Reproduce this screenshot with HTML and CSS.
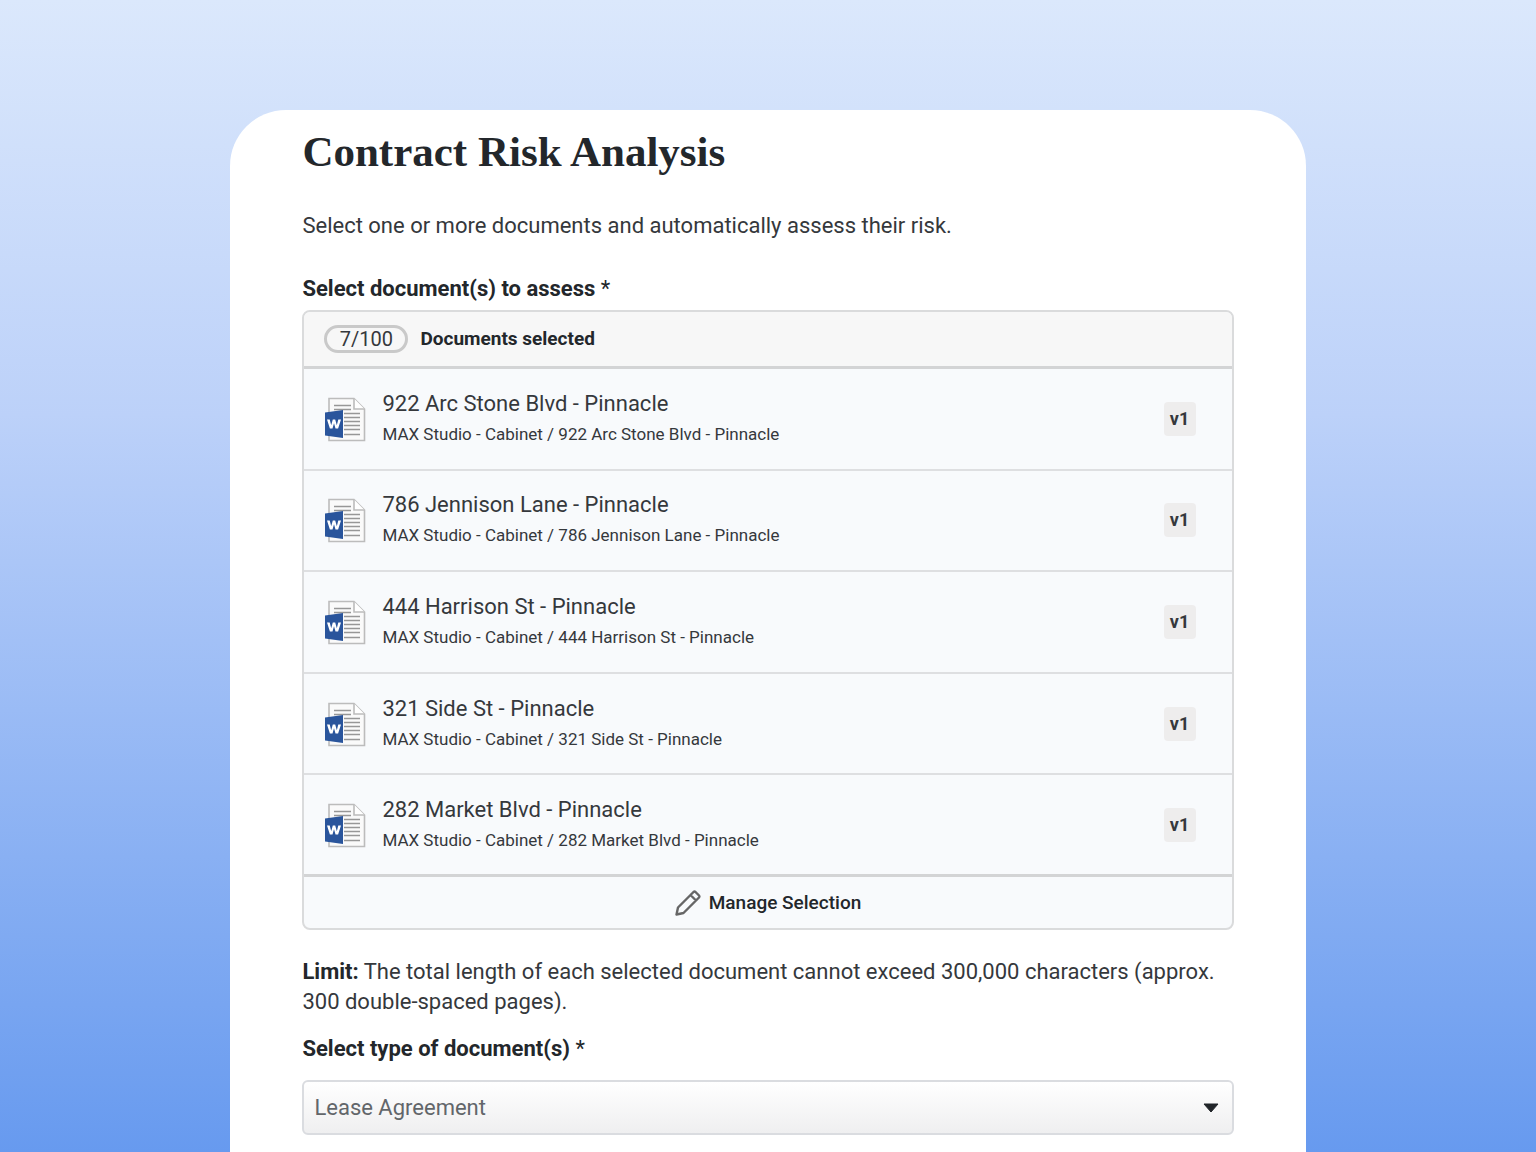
FILE: index.html
```html
<!DOCTYPE html>
<html lang="en">
<head>
<meta charset="utf-8">
<meta name="viewport" content="width=device-width, initial-scale=1">
<title>Contract Risk Analysis</title>
<link rel="stylesheet" href="styles.css">
</head>
<body>
<svg class="sprite" aria-hidden="true">
  <symbol id="word" viewBox="0 0 42 46">
    <path d="M5 2.500H30L40.500 13V44.500H5Z" fill="#fafafa" stroke="#bcbcbc" stroke-width="1.600"/>
    <path d="M30 2.500V13H40.500" fill="#fff" stroke="#bcbcbc" stroke-width="1.600"/>
    <path d="M10 9.500H27M10 13.500H27M20 17.500H36M20 21.500H36M20 25.500H36M20 29.500H36M20 33.500H36M20 38.500H36" stroke="#979797" stroke-width="1.500"/>
    <path d="M1 16.500L19 14V42L1 39.500Z" fill="#2a559c"/>
    <path d="M3 23.500H5.700L7.200 29.200L8.800 23.500H11.200L12.800 29.200L14.300 23.500H17L14.100 32.500H11.500L10 27.300L8.500 32.500H5.900Z" fill="#fff"/>
  </symbol>
</svg>
<main class="card">
  <h1 class="title">Contract Risk Analysis</h1>
  <p class="intro">Select one or more documents and automatically assess their risk.</p>
  <h2 class="label" id="docs-label">Select document(s) to assess <span class="required">*</span></h2>
  <section class="picker" aria-labelledby="docs-label">
    <header class="picker-head">
      <span class="count">7/100</span>
      <span class="picker-title">Documents selected</span>
    </header>
    <ul class="docs">
      <li class="doc">
        <svg class="doc-icon" aria-hidden="true"><use href="#word"/></svg>
        <div class="doc-text"><div class="doc-name">922 Arc Stone Blvd - Pinnacle</div><div class="doc-path">MAX Studio - Cabinet / 922 Arc Stone Blvd - Pinnacle</div></div>
        <span class="version">v1</span>
      </li>
      <li class="doc">
        <svg class="doc-icon" aria-hidden="true"><use href="#word"/></svg>
        <div class="doc-text"><div class="doc-name">786 Jennison Lane - Pinnacle</div><div class="doc-path">MAX Studio - Cabinet / 786 Jennison Lane - Pinnacle</div></div>
        <span class="version">v1</span>
      </li>
      <li class="doc">
        <svg class="doc-icon" aria-hidden="true"><use href="#word"/></svg>
        <div class="doc-text"><div class="doc-name">444 Harrison St - Pinnacle</div><div class="doc-path">MAX Studio - Cabinet / 444 Harrison St - Pinnacle</div></div>
        <span class="version">v1</span>
      </li>
      <li class="doc">
        <svg class="doc-icon" aria-hidden="true"><use href="#word"/></svg>
        <div class="doc-text"><div class="doc-name">321 Side St - Pinnacle</div><div class="doc-path">MAX Studio - Cabinet / 321 Side St - Pinnacle</div></div>
        <span class="version">v1</span>
      </li>
      <li class="doc">
        <svg class="doc-icon" aria-hidden="true"><use href="#word"/></svg>
        <div class="doc-text"><div class="doc-name">282 Market Blvd - Pinnacle</div><div class="doc-path">MAX Studio - Cabinet / 282 Market Blvd - Pinnacle</div></div>
        <span class="version">v1</span>
      </li>
    </ul>
    <button class="manage" type="button">
      <svg class="pencil" viewBox="0 0 26 26" aria-hidden="true"><path d="M1.500 24.500L3 17.500L18.500 2Q19.500 1.200 20.500 2L24 5.500Q24.800 6.500 24 7.500L8.500 23ZM15.500 5L21 10.500" fill="none" stroke="#666" stroke-width="2.400" stroke-linejoin="round"/></svg>
      Manage Selection
    </button>
  </section>
  <p class="limit"><strong>Limit:</strong> The total length of each selected document cannot exceed 300,000 characters (approx. 300 double-spaced pages).</p>
  <label class="label" for="doc-type">Select type of document(s) <span class="required">*</span></label>
  <div class="select-wrap">
    <select class="select" id="doc-type"><option>Lease Agreement</option></select>
    <svg class="caret" viewBox="0 0 16 10" aria-hidden="true"><path d="M1 1H15L8 9Z" fill="#212529" stroke="#212529" stroke-linejoin="round"/></svg>
  </div>
</main>
</body>
</html>
```
FILE: styles.css
```css
* { box-sizing: border-box; }

body {
  display: flex;
  justify-content: center;
  min-height: 100vh;
  margin: 0;
  padding-top: 110px;
  background: linear-gradient(#dbe8fc, #bcd1f9 36%, #679aef);
  color: #35383c;
  font: 22px/30px Roboto, "Liberation Sans", sans-serif;
}

.sprite { position: absolute; width: 0; height: 0; }

.card {
  width: 70%;
  padding: 14px 72px 16px;
  border-radius: 56px 56px 0 0;
  background: #fff;
}

.title {
  margin: 0;
  color: #23272b;
  font: bold 43px/56px "Liberation Serif", serif;
}

.intro { margin: 31px 0 33px; }

.label {
  display: block;
  margin: 0;
  color: #23272b;
  font-size: 22px;
  font-weight: 700;
  line-height: 30px;
}

.required { font-weight: 400; }

.picker {
  margin-top: 6px;
  overflow: hidden;
  border: 2px solid #dadbdc;
  border-radius: 8px;
  background: #f8fafc;
}

.picker-head {
  display: flex;
  align-items: center;
  gap: 12px;
  height: 57px;
  padding: 0 20px;
  border-bottom: 3px solid #d3d4d5;
  background: #f7f7f7;
}

.count {
  width: 84px;
  border: 3px solid #c9c9c9;
  border-radius: 14px;
  font-size: 20px;
  line-height: 22px;
  text-align: center;
}

.picker-title {
  color: #23272b;
  font-size: 19px;
  font-weight: 700;
}

.docs {
  display: grid;
  grid-auto-rows: 1fr;
  min-height: 508px;
  margin: 0;
  padding: 0;
  list-style: none;
}

.doc {
  display: flex;
  align-items: center;
  gap: 16px;
  padding: 0 36px 0 20px;
  border-bottom: 2px solid #dedfe1;
}

.doc:last-child { border-bottom: 3px solid #d3d4d5; }

.doc-icon { width: 42px; height: 46px; }

.doc-text { flex: 1; }

.doc-path { font-size: 17px; }

.version {
  width: 32px;
  border-radius: 4px;
  background: #eeeded;
  font-size: 18px;
  font-weight: 700;
  line-height: 34px;
  text-align: center;
}

.manage {
  display: flex;
  align-items: center;
  justify-content: center;
  gap: 8px;
  width: 100%;
  height: 51px;
  padding: 0;
  border: 0;
  background: none;
  color: #23272b;
  font: 500 19px/30px Roboto, "Liberation Sans", sans-serif;
}

.pencil { width: 26px; height: 26px; }

.limit { margin: 27px 0 17px; }

.limit strong { color: #23272b; }

.select-wrap { position: relative; margin-top: 16px; }

.select {
  display: block;
  width: 100%;
  height: 55px;
  padding: 0 48px 0 10px;
  appearance: none;
  border: 2px solid #dadce0;
  border-radius: 6px;
  background: linear-gradient(#fff, #efeff0);
  color: #62666a;
  font: inherit;
}

.caret {
  position: absolute;
  top: 23px;
  right: 15px;
  width: 16px;
  height: 10px;
  pointer-events: none;
}
```
